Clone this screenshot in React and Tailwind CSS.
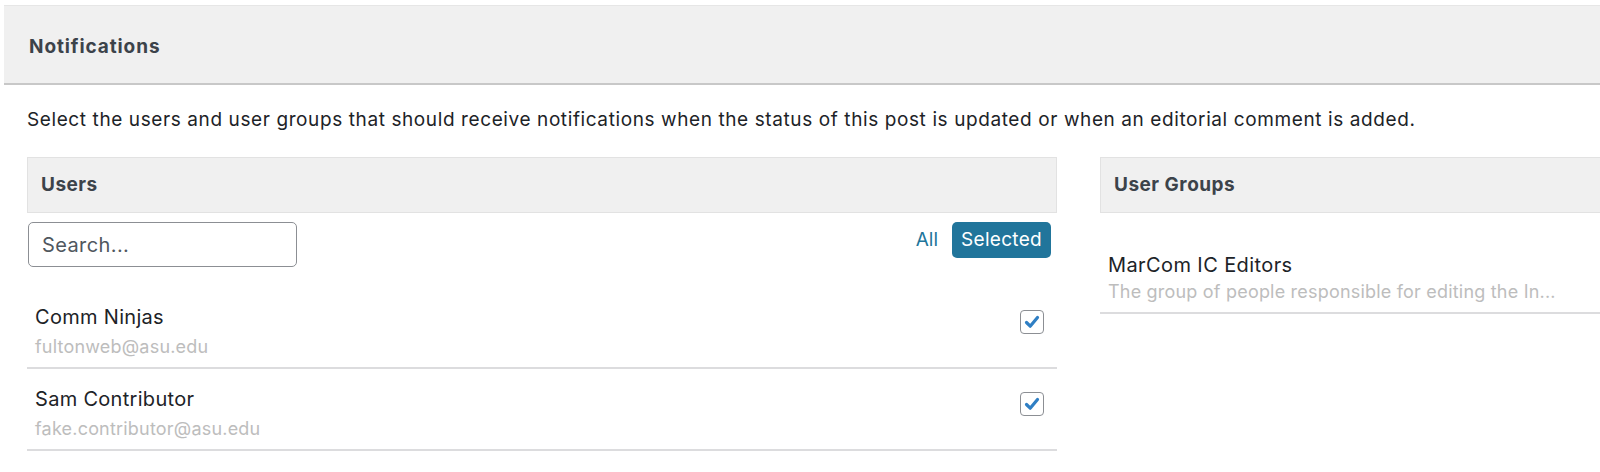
const users = [
  { name: 'Comm Ninjas', email: 'fultonweb@asu.edu' },
  { name: 'Sam Contributor', email: 'fake.contributor@asu.edu' },
]

function CheckBox() {
  return (
    <div className="mt-[6px] flex h-[24px] w-[24px] items-center justify-center rounded-[4px] border border-[#8c8f94] bg-white">
      <svg viewBox="0 0 20 20" className="h-[20px] w-[20px]">
        <path d="M4.5 10.5 L8.2 14.2 L15.5 5.5" fill="none" stroke="#2f7fc4" strokeWidth="3.2" strokeLinecap="round" strokeLinejoin="round" />
      </svg>
    </div>
  )
}

function PanelHeader({ title }) {
  return (
    <div className="flex h-[56px] items-center border border-[#e2e2e2] bg-[#f0f0f0] px-[13px] pt-[1px] text-[19px] font-bold tracking-[0.5px] text-[#3c434a]">
      {title}
    </div>
  )
}

export default function App() {
  return (
    <div className="h-[472px] w-[1600px] overflow-hidden bg-white pl-[4px] pt-[5px] font-['Inter',sans-serif] text-[#1d2327]">
      <div className="flex h-[80px] items-center border-t border-b-2 border-t-[#e6e6e6] border-b-[#c8c8c8] bg-[#f0f0f0] px-[25px] pt-[5px] text-[19px] font-bold tracking-[0.9px] text-[#3c434a]">
        Notifications
      </div>

      <div className="pl-[23px]">
        <p className="mt-[22px] text-[19px] leading-[26px] tracking-[0.6px] text-[#1d2327]">
          Select the users and user groups that should receive notifications when the status of this post is updated or when an editorial comment is added.
        </p>

        <div className="mt-[24px] flex gap-[43px]">
          <div className="w-[1030px] shrink-0">
            <PanelHeader title="Users" />

            <div className="mt-[9px] flex items-start justify-between">
              <input
                type="text"
                placeholder="Search..."
                className="ml-[1px] h-[45px] w-[269px] rounded-[5px] border border-[#8c8f94] px-[13px] text-[20px] tracking-[0.4px] text-[#50575e] placeholder:text-[#50575e]"
              />
              <div className="mr-[6px] flex items-center gap-[14px]">
                <span className="text-[19px] text-[#21759b]">All</span>
                <span className="flex h-[36px] items-center rounded-[5px] bg-[#21759b] px-[9px] text-[19px] tracking-[0.3px] text-white">
                  Selected
                </span>
              </div>
            </div>

            <div className="mt-[20px]">
              {users.map((u) => (
                <div key={u.email} className="flex items-start justify-between border-b-2 border-[#dcdcde] pb-[5px] pl-[8px] pr-[13px] pt-[17px]">
                  <div>
                    <div className="text-[20px] leading-[26px] tracking-[0.3px] text-[#1d2327]">{u.name}</div>
                    <div className="mt-[2px] text-[18px] leading-[30px] tracking-[0.2px] text-[#bdbdbd]">{u.email}</div>
                  </div>
                  <CheckBox />
                </div>
              ))}
            </div>
          </div>

          <div className="w-[540px] shrink-0">
            <PanelHeader title="User Groups" />
            <div className="border-b-2 border-[#dcdcde] pb-[6px] pl-[8px] pt-[39px]">
              <div className="text-[20px] leading-[26px] tracking-[0.4px] text-[#1d2327]">MarCom IC Editors</div>
              <div className="text-[18px] leading-[28px] tracking-[0.2px] text-[#bdbdbd]">The group of people responsible for editing the In...</div>
            </div>
          </div>
        </div>
      </div>
    </div>
  )
}
